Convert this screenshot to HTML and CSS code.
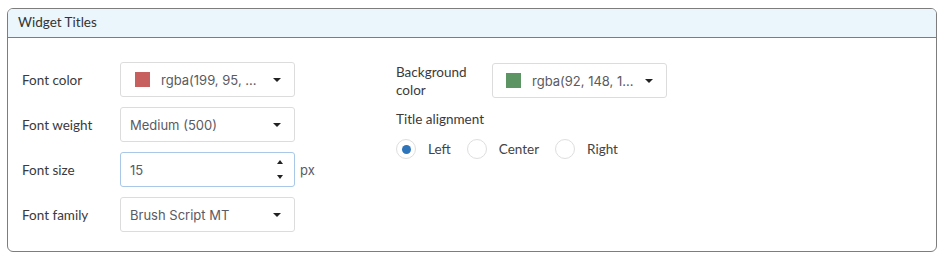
FILE: index.html
```html
<!DOCTYPE html>
<html>
<head>
<meta charset="utf-8">
<link rel="stylesheet" href="styles.css">
</head>
<body>
<div class="panel">
  <div class="panel-head">Widget Titles</div>
  <div class="panel-body">
    <div class="col-left">
      <div class="row">
        <div class="label">Font color</div>
        <div class="select"><span class="swatch swatch-red"></span><span class="val">rgba(199, 95, ...</span><span class="caret"></span></div>
      </div>
      <div class="row">
        <div class="label">Font weight</div>
        <div class="select"><span class="val">Medium (500)</span><span class="caret"></span></div>
      </div>
      <div class="row">
        <div class="label">Font size</div>
        <div class="select focus"><span class="val">15</span><span class="spin"><span class="up"></span><span class="down"></span></span></div>
        <div class="unit">px</div>
      </div>
      <div class="row">
        <div class="label">Font family</div>
        <div class="select"><span class="val">Brush Script MT</span><span class="caret"></span></div>
      </div>
    </div>
    <div class="col-right">
      <div class="row">
        <div class="label">Background<br>color</div>
        <div class="select"><span class="swatch swatch-green"></span><span class="val">rgba(92, 148, 1...</span><span class="caret"></span></div>
      </div>
      <div class="sub">Title alignment</div>
      <div class="radios">
        <label class="radio"><span class="circle checked"></span>Left</label>
        <label class="radio"><span class="circle"></span>Center</label>
        <label class="radio"><span class="circle"></span>Right</label>
      </div>
    </div>
  </div>
</div>
</body>
</html>
```

FILE: styles.css
```css
* { box-sizing: border-box; }
body {
  margin: 0;
  padding: 8px 8px 0 7px;
  background: #fff;
  font-family: "Lato", "Open Sans", sans-serif;
  font-size: 13.5px;
  color: #3a3a3a;
}
.panel {
  width: 930px;
  height: 244px;
  border: 1px solid #7d7d7d;
  border-radius: 6px;
  overflow: hidden;
}
.panel-head {
  height: 29px;
  background: #eaf5fc;
  border-bottom: 1px solid #7d7d7d;
  padding: 5px 0 0 10px;
  color: #333;
}
.panel-body {
  display: flex;
  padding: 24px 0 0 14px;
}
.col-left {
  display: flex;
  flex-direction: column;
  gap: 10px;
  width: 373px;
}
.row {
  display: flex;
  align-items: center;
  height: 35px;
}
.label {
  width: 98px;
  line-height: 18px;
  color: #3a3a3a;
}
.col-right .label { width: 96px; }
.col-right .row { margin-top: 1px; }
.select {
  width: 175px;
  height: 35px;
  border: 1px solid #dcdcdc;
  border-radius: 3px;
  display: flex;
  align-items: center;
  padding: 0 13px 0 9px;
  font-family: "Inter", sans-serif;
  font-size: 13px;
  color: #5a5a62;
}
.select.focus { border-color: #a9c7e6; }
.col-right .select { width: 175px; padding-left: 13px; }
.swatch {
  width: 15px;
  height: 15px;
  margin: 0 11px 0 5px;
  flex: none;
}
.col-right .swatch { margin-left: 0; }
.swatch-red { background: #c75f5f; }
.swatch-green { background: #5c9464; }
.val { flex: 1; white-space: nowrap; overflow: hidden; }
.caret {
  width: 0; height: 0;
  border-left: 4px solid transparent;
  border-right: 4px solid transparent;
  border-top: 4px solid #222;
}
.spin {
  display: flex;
  flex-direction: column;
  gap: 11px;
  margin-right: -2px;
}
.spin .up {
  width: 0; height: 0;
  border-left: 3.5px solid transparent;
  border-right: 3.5px solid transparent;
  border-bottom: 4px solid #222;
}
.spin .down {
  width: 0; height: 0;
  border-left: 3.5px solid transparent;
  border-right: 3.5px solid transparent;
  border-top: 4px solid #222;
}
.unit {
  margin-left: 5px;
  font-family: "Inter", sans-serif;
  font-size: 13px;
  color: #5a5a62;
}
.col-right {
  display: flex;
  flex-direction: column;
  padding-left: 1px;
}
.sub {
  margin-top: 12px;
  line-height: 18px;
}
.radios {
  display: flex;
  align-items: center;
  margin-top: 11px;
  gap: 16px;
}
.radio {
  display: flex;
  align-items: center;
  gap: 12px;
  color: #444;
}
.circle {
  width: 20px;
  height: 20px;
  border: 1px solid #dedede;
  border-radius: 50%;
  display: flex;
  align-items: center;
  justify-content: center;
}
.circle.checked::after {
  content: "";
  width: 9px;
  height: 9px;
  border-radius: 50%;
  background: #2e74bb;
}
```
